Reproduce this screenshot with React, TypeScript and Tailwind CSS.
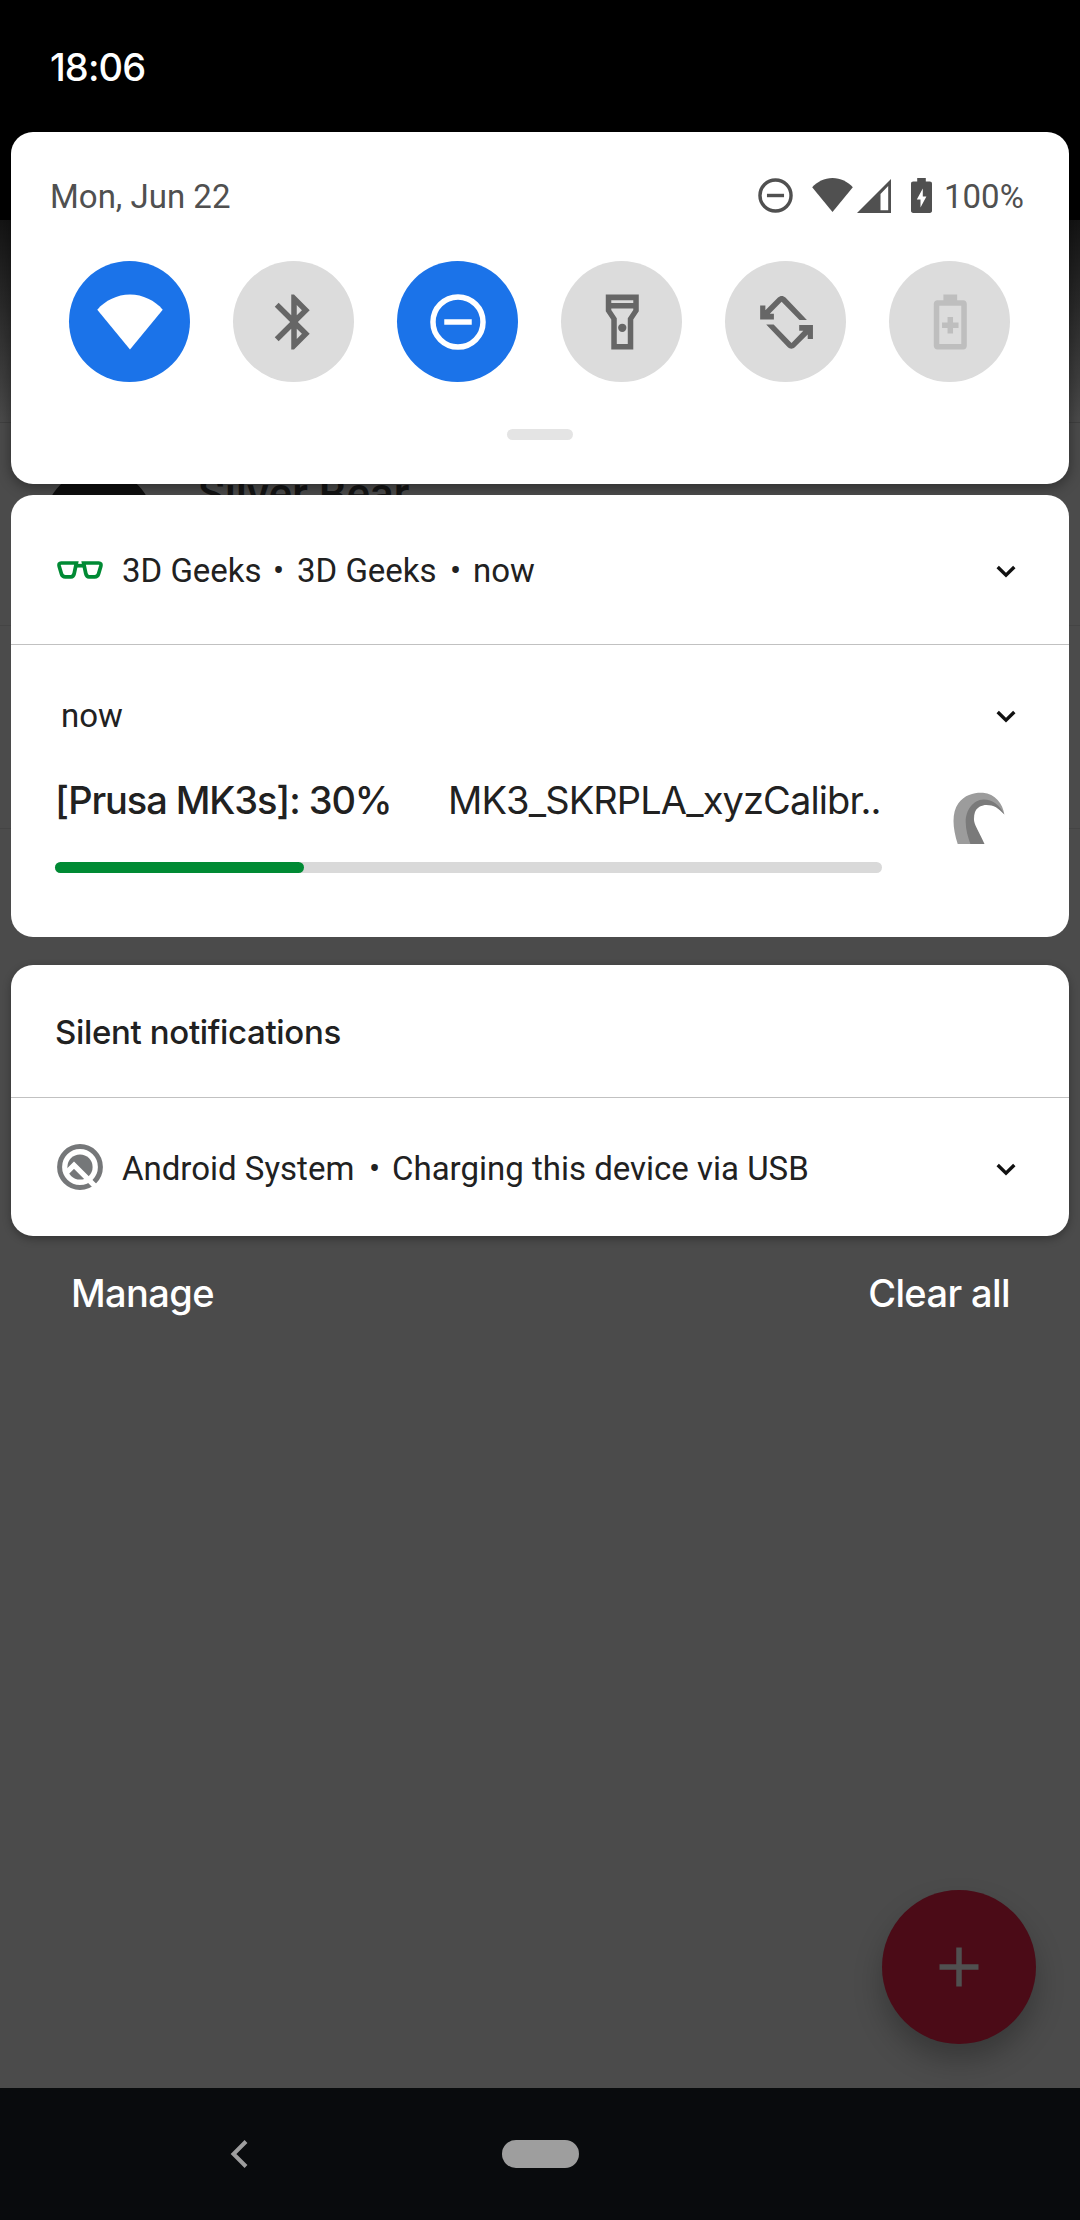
import type { ReactNode } from 'react';

const WIFI = 'M12 22L23.9 7.5C21 4.2 16.7 2 12 2S3 4.2.1 7.5z';

function DndIcon({ className }: { className: string }) {
  return (
    <svg viewBox="0 0 24 24" className={className} fill="none" stroke="currentColor" strokeWidth="2">
      <circle cx="12" cy="12" r="9.1" />
      <path d="M7 12h10" />
    </svg>
  );
}

function BluetoothIcon() {
  return (
    <svg viewBox="0 0 24 24" className="size-[66px]" fill="currentColor">
      <path d="M17.71 7.71L12 2h-1v7.59L6.41 5 5 6.41 10.59 12 5 17.59 6.41 19 11 14.41V22h1l5.71-5.71-4.3-4.29 4.3-4.29zM13 5.83l1.88 1.88L13 9.59V5.83zm1.88 10.46L13 18.17v-3.76l1.88 1.88z" />
    </svg>
  );
}

function FlashlightIcon() {
  return (
    <svg viewBox="0 0 24 24" className="size-[66px]" fill="currentColor">
      <path
        fillRule="evenodd"
        d="M6.1 2h12v6.1l-2 3V22h-8V11.1l-2-3zM8.1 4.1v1h8v-1zM8.1 7.1v.5l2 3V20h4v-9.4l2-3v-.5z"
      />
      <circle cx="12.1" cy="14.1" r="1.5" />
    </svg>
  );
}

function RotateIcon() {
  const arrow = 'M2.6 11.1V6h1.9v1.7L9.1 3.1c.8-.8 1.9-.8 2.7 0l7.8 8.2h-2.7l-6.5-6.7-4.3 4.4h1.5v2.1z';
  return (
    <svg viewBox="0 0 24 24" className="size-[66px]" fill="currentColor">
      <path d={arrow} />
      <path d={arrow} transform="rotate(180 12.2 12.1)" />
    </svg>
  );
}

function BatterySaverIcon() {
  return (
    <svg viewBox="0 0 24 24" className="size-[66px]" fill="currentColor">
      <path
        fillRule="evenodd"
        d="M9.6 2h5v2.1h2.2c.8 0 1.3.6 1.3 1.3v15.3c0 .7-.5 1.3-1.3 1.3H7.4c-.7 0-1.3-.6-1.3-1.3V5.4c0-.7.6-1.3 1.3-1.3h2.2zM8.1 6.1V20h8V6.1z"
      />
      <path d="M11.1 10.2h2v2h2v2h-2v2h-2v-2h-2v-2h2z" />
    </svg>
  );
}

function GlassesIcon() {
  const lens = 'M4.2 2H19.4L17.2 12.5c-.5 2.2-1.3 3.3-3.2 3.3H8.4c-2.2 0-3.4-.8-4-3.1L2.2 5.2C1.7 2.900 2.400 2 4.200 2z';
  return (
    <svg viewBox="0 0 46 18" className="mb-[3px] h-[18px] w-[46px] shrink-0" fill="none" stroke="#008a34" strokeWidth="3.7">
      <path d={lens} />
      <path d={lens} transform="matrix(-1 0 0 1 46 0)" />
      <path d="M18.500 4.700h9" />
    </svg>
  );
}

function AndroidQIcon() {
  return (
    <svg viewBox="0 0 46 46" className="mb-1 size-[46px] shrink-0">
      <circle cx="23" cy="23" r="20.4" fill="none" stroke="#757779" strokeWidth="5" />
      <circle cx="23" cy="23" r="12.6" fill="#757779" />
      <path d="M9 29.200L17 21.200L41 45.200" fill="none" stroke="#fff" strokeWidth="5.200" />
    </svg>
  );
}

function OctoPrintIcon() {
  return (
    <svg viewBox="0 0 52 52" className="size-[52px]">
      <path
        fill="#9c9c9c"
        d="M4.700 52C-.5 36-1.500 21 5.400 11.300 12 2 22 .3 30 .7 42 1.500 50 12 51.400 22.500L40 12 22 14 20 40 18 52z"
      />
      <path
        fill="#7a7a7a"
        d="M51.400 22.500C47 13 39 7.300 30.500 7.500 20 8 12.700 18 12.700 30c0 8 2.300 15 4.700 22h14.100c-3-7-6.500-13-9-18.500C18 22 23.500 13 33.500 13c7 0 12.500 3 17.900 9.500z"
      />
    </svg>
  );
}

function Chevron() {
  return (
    <svg viewBox="0 0 20 13" className="h-[13px] w-5 shrink-0" fill="none" stroke="#111" strokeWidth="3.400">
      <path d="M1.700 2l8.300 8.200L18.300 2" />
    </svg>
  );
}

function Tile({ on, dim, children }: { on?: boolean; dim?: boolean; children: ReactNode }) {
  const tone = on ? 'bg-[#1b73e9] text-white' : dim ? 'bg-[#dcdcdc] text-[#bebebe]' : 'bg-[#dcdcdc] text-[#666666]';
  return <div className={`flex size-[121px] items-center justify-center rounded-full ${tone}`}>{children}</div>;
}

function AppBehind() {
  return (
    <div className="absolute inset-0 flex flex-col overflow-hidden bg-[#4b4b4b]">
      <div className="h-[220px] shrink-0 bg-black" />
      <div className="h-[203px] shrink-0 border-b border-[#404040] bg-linear-to-b from-[#141414] to-[#4a4a4a]" />
      <div className="flex h-[203px] shrink-0 items-center border-b border-[#444444] pl-11">
        <div className="size-[110px] rounded-full bg-[#0e0e0e]" />
        <div className="mb-[61px] ml-[44px] text-[44px] leading-none font-medium text-[#141414]">Silver Bear</div>
      </div>
      <div className="h-[203px] shrink-0 border-b border-[#444444]" />
      <div className="mt-auto mr-11 mb-11 flex size-[154px] items-center justify-center self-end rounded-full bg-[#4b0b17] shadow-[0_16px_28px_rgba(0,0,0,0.25)]">
        <svg viewBox="0 0 40 40" className="size-10" stroke="#505050" strokeWidth="5.500">
          <path d="M20 .5v39M.5 20h39" />
        </svg>
      </div>
      <div className="flex h-[132px] shrink-0 items-center bg-[#090b0d] pl-[230px]">
        <svg viewBox="0 0 18 28" className="h-7 w-[18px]" fill="none" stroke="#9e9e9e" strokeWidth="4">
          <path d="M16 1.500L3.500 14 16 26.500" />
        </svg>
        <div className="ml-[254px] h-7 w-[77px] rounded-full bg-[#9e9e9e]" />
      </div>
    </div>
  );
}

function QuickSettings() {
  return (
    <section className="h-[352px] rounded-[22px] bg-white shadow-[0_3px_14px_rgba(0,0,0,0.4)]">
      <div className="flex h-[129px] items-center pl-[39px] text-[33px] text-[#505050]">
        <div className="w-[705px]">Mon, Jun 22</div>
        <DndIcon className="mb-[2px] size-[41px]" />
        <svg viewBox="0 2 24 20" preserveAspectRatio="none" className="mb-[3px] ml-4 h-[34px] w-[41px]" fill="currentColor">
          <path d={WIFI} />
        </svg>
        <svg viewBox="0 0 34 34" className="mb-[2px] ml-1 size-[34px]" fill="currentColor">
          <path fillRule="evenodd" d="M34 0v34H0zM31.200 7L23.500 15v16.200h7.700z" />
        </svg>
        <svg viewBox="0 0 21 35" className="mb-[3px] ml-5 h-[35px] w-[21px]" fill="currentColor">
          <path
            fillRule="evenodd"
            d="M6.200 0h8.600v3.500h4c1.400 0 2.200.9 2.200 2.200v27.100c0 1.300-.8 2.200-2.200 2.200H2.200C.9 35 0 34.100 0 32.800V5.700c0-1.300.9-2.200 2.200-2.200h4zM11.800 10.500L5.800 21.500h3.700v8l5.900-11h-3.600z"
          />
        </svg>
        <div className="ml-3">100%</div>
      </div>
      <div className="flex gap-[43px] pl-[58px]">
        <Tile on>
          <svg viewBox="0 0 24 24" className="size-[66px]" fill="currentColor">
            <path d={WIFI} />
          </svg>
        </Tile>
        <Tile>
          <BluetoothIcon />
        </Tile>
        <Tile on>
          <DndIcon className="size-[66px]" />
        </Tile>
        <Tile>
          <FlashlightIcon />
        </Tile>
        <Tile>
          <RotateIcon />
        </Tile>
        <Tile dim>
          <BatterySaverIcon />
        </Tile>
      </div>
      <div className="mx-auto mt-[47px] h-[11px] w-[66px] rounded-full bg-[#e4e4e4]" />
    </section>
  );
}

function PrintNotification() {
  return (
    <section className="mt-[11px] h-[442px] rounded-[22px] bg-white text-[#212121]">
      <div className="flex h-[150px] items-center border-b border-[#c1c1c1] pt-[3px] pr-[53px] pl-[46px] text-[33px]">
        <GlassesIcon />
        <div className="ml-[19px] flex">
          <span className="w-[151px]">3D Geeks</span>
          <span className="w-[24px]">•</span>
          <span className="w-[153px]">3D Geeks</span>
          <span className="w-[23px]">•</span>
          <span>now</span>
        </div>
        <div className="ml-auto">
          <Chevron />
        </div>
      </div>
      <div className="flex h-[100px] items-end justify-between pr-[53px] pl-[50px]">
        <span className="text-[33px] leading-[58px]">now</span>
        <div className="pb-[22px]">
          <Chevron />
        </div>
      </div>
      <div className="flex pl-11">
        <div className="w-[827px]">
          <div className="mb-[7px] flex h-[110px] items-center font-['Inter',sans-serif] text-[38px]">
            <span className="w-[393px] shrink-0 font-medium tracking-[-1.1px] whitespace-nowrap">[Prusa MK3s]: 30%</span>
            <span className="tracking-[-0.88px] whitespace-nowrap">MK3_SKRPLA_xyzCalibr..</span>
          </div>
          <div className="h-[11px] rounded-full bg-[#d9d9d9]">
            <div className="h-full w-[30.1%] rounded-full bg-[#008a34]" />
          </div>
        </div>
        <div className="mt-[47px] ml-[71px]">
          <OctoPrintIcon />
        </div>
      </div>
    </section>
  );
}

function SilentNotifications() {
  return (
    <section className="mt-7 h-[271px] rounded-[22px] bg-white text-[#212121] shadow-[0_3px_8px_rgba(0,0,0,0.3)]">
      <h2 className="flex h-[133px] items-center border-b border-[#c1c1c1] pt-[3px] pl-[44px] font-['Inter',sans-serif] text-[33px] font-medium tracking-[-0.34px]">
        Silent notifications
      </h2>
      <div className="flex h-[138px] items-center pt-1 pr-[53px] pl-[46px] text-[33px]">
        <AndroidQIcon />
        <div className="ml-[19px] flex">
          <span className="w-[247px]">Android System</span>
          <span className="w-[23px]">•</span>
          <span>Charging this device via USB</span>
        </div>
        <div className="ml-auto">
          <Chevron />
        </div>
      </div>
    </section>
  );
}

export default function App() {
  return (
    <div className="relative h-[2220px] w-[1080px] overflow-hidden font-['Roboto',sans-serif]">
      <AppBehind />
      <div className="relative flex flex-col px-[11px]">
        <div className="flex h-[132px] items-center pt-[3px] pl-[39px] font-['Inter',sans-serif] text-[38px] font-medium tracking-[-0.9px] text-white">
          18:06
        </div>
        <QuickSettings />
        <PrintNotification />
        <SilentNotifications />
        <div className="flex h-[114px] items-center justify-between pr-[59px] pl-[60px] font-['Inter',sans-serif] text-[38px] font-medium tracking-[-0.6px] text-white">
          <span>Manage</span>
          <span>Clear all</span>
        </div>
      </div>
    </div>
  );
}
